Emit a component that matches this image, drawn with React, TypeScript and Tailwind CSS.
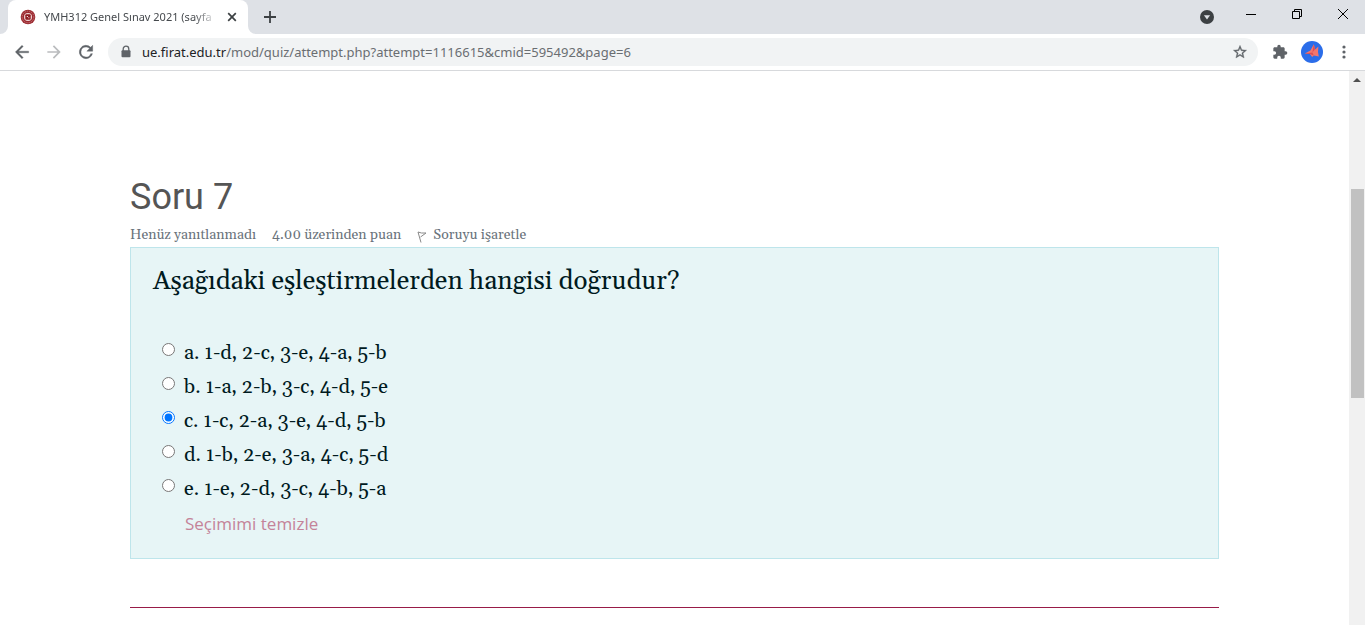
import React, { useState } from "react";

const serif = "font-[Georgia,Gelasio,'Liberation_Serif',serif]";

const options = [
  { id: "a", text: "a. 1-d, 2-c, 3-e, 4-a, 5-b" },
  { id: "b", text: "b. 1-a, 2-b, 3-c, 4-d, 5-e" },
  { id: "c", text: "c. 1-c, 2-a, 3-e, 4-d, 5-b" },
  { id: "d", text: "d. 1-b, 2-e, 3-a, 4-c, 5-d" },
  { id: "e", text: "e. 1-e, 2-d, 3-c, 4-b, 5-a" },
];

function TabStrip() {
  return (
    <div className="flex h-[34px] items-start bg-[#dee1e6]">
      <div className="flex h-full items-end">
        <svg className="h-2 w-2" viewBox="0 0 8 8"><path d="M8 0v8H0a8 8 0 0 0 8-8z" fill="#fff" /></svg>
        <div className="flex h-[34px] w-[240px] items-center rounded-t-lg bg-white pl-3">
          <svg className="h-4 w-4 shrink-0" viewBox="0 0 16 16">
            <circle cx="8" cy="8" r="7.3" fill="#9c2a30" />
            <circle cx="8" cy="8" r="5.8" fill="none" stroke="#c98285" strokeWidth=".8" strokeDasharray="1.5 .8" />
            <circle cx="8" cy="8" r="4" fill="#f0d8d8" />
            <rect x="5.3" y="5.3" width="5.4" height="5.4" rx="1" fill="#8f1d23" />
            <path d="M6.8 7h1.2v1H6.8zM8.3 8.2h1v1h-1z" fill="#f3dede" />
          </svg>
          <div className="ml-2 w-[174px] whitespace-nowrap font-['Noto_Sans',sans-serif] text-[11px] text-[#45494d] [mask-image:linear-gradient(to_right,black_86%,transparent)]">
            YMH312 Genel Sınav 2021 (sayfa
          </div>
          <button aria-label="Sekmeyi kapat" className="ml-2">
            <svg className="h-3 w-3" viewBox="0 0 12 12"><path d="M2.2 2.2l7.6 7.6M9.8 2.2L2.2 9.8" stroke="#3c4043" strokeWidth="1.7" /></svg>
          </button>
        </div>
        <svg className="h-2 w-2" viewBox="0 0 8 8"><path d="M0 0v8h8a8 8 0 0 1-8-8z" fill="#fff" /></svg>
      </div>
      <button aria-label="Yeni sekme" className="ml-2 mt-[11px]">
        <svg className="h-3 w-3" viewBox="0 0 12 12"><path d="M6 0v12M0 6h12" stroke="#3c4043" strokeWidth="1.8" /></svg>
      </button>
      <div className="ml-auto flex h-7 items-center">
        <button aria-label="Sekmelerde ara" className="mr-8 pt-1.5">
          <svg className="h-3.5 w-3.5" viewBox="0 0 14 14"><circle cx="7" cy="7" r="7" fill="#3c4043" /><path d="M3.9 5.2h6.2L7 9.4z" fill="#dee1e6" /></svg>
        </button>
        <button aria-label="Simge durumuna küçült" className="mr-9">
          <svg className="h-[10px] w-[10px]" viewBox="0 0 10 10"><path d="M0 5.5h10" stroke="#000" /></svg>
        </button>
        <button aria-label="Geri yükle" className="mr-9">
          <svg className="h-[10px] w-[10px]" viewBox="0 0 10 10"><path d="M.5 2.5h7v7h-7zM2.5 2.5v-2h7v7h-2" fill="none" stroke="#000" /></svg>
        </button>
        <button aria-label="Kapat" className="mr-[17px]">
          <svg className="h-[10px] w-[10px]" viewBox="0 0 10 10"><path d="M0 0l10 10M10 0L0 10" stroke="#000" /></svg>
        </button>
      </div>
    </div>
  );
}

function Toolbar() {
  return (
    <div className="flex h-[37px] items-center border-b border-[#d7d9dc] bg-white pl-3">
      <button aria-label="Geri"><svg className="h-5 w-5" viewBox="0 0 24 24"><path d="M20 11H7.83l5.59-5.59L12 4l-8 8 8 8 1.41-1.41L7.83 13H20z" fill="#5f6368" stroke="#5f6368" strokeWidth=".4" /></svg></button>
      <button aria-label="İleri" className="ml-3"><svg className="h-5 w-5" viewBox="0 0 24 24"><path d="M12 4l-1.41 1.41L16.17 11H4v2h12.17l-5.58 5.59L12 20l8-8z" fill="#babcbe" /></svg></button>
      <button aria-label="Yenile" className="ml-3"><svg className="h-5 w-5" viewBox="0 0 24 24"><path d="M17.65 6.35A8 8 0 1 0 19.73 14h-2.08A6 6 0 1 1 12 6c1.66 0 3.14.69 4.22 1.78L13 11h7V4z" fill="#5f6368" stroke="#5f6368" strokeWidth=".5" /></svg></button>
      <div className="ml-3 flex h-7 flex-1 items-center rounded-full bg-[#f1f3f4] pl-3 pr-2.5">
        <svg className="h-3.5 w-3 shrink-0" viewBox="0 0 12 14"><path d="M3.2 6V4a2.8 2.8 0 0 1 5.6 0v2" fill="none" stroke="#5f6368" strokeWidth="1.3" /><rect x="1.5" y="5.2" width="9" height="7" rx="1" fill="#5f6368" /></svg>
        <div className="ml-2.5 flex-1 whitespace-nowrap pt-px font-['Noto_Sans',sans-serif] text-[13px] text-[#6a6e72]">
          <span className="text-[#202124]">ue.firat.edu.tr</span>/mod/quiz/attempt.php?attempt=1116615&amp;cmid=595492&amp;page=6
        </div>
        <button aria-label="Yer işareti ekle"><svg className="h-4 w-4" viewBox="0 0 24 24"><path d="M22 9.24l-7.19-.62L12 2 9.19 8.63 2 9.24l5.46 4.73L5.82 21 12 17.27 18.18 21l-1.63-7.03zM12 15.4l-3.76 2.27 1-4.28-3.32-2.88 4.38-.38L12 6.1l1.71 4.04 4.38.38-3.32 2.88 1 4.28z" fill="#5f6368" stroke="#5f6368" strokeWidth=".5" /></svg></button>
      </div>
      <button aria-label="Uzantılar" className="ml-3.5"><svg className="h-4 w-4" viewBox="0 0 24 24"><path d="M20.5 11H19V7c0-1.1-.9-2-2-2h-4V3.5a2.5 2.5 0 0 0-5 0V5H4c-1.1 0-2 .9-2 2v3.8h1.5a2.7 2.7 0 0 1 0 5.4H2V20c0 1.1.9 2 2 2h3.8v-1.5a2.7 2.7 0 0 1 5.4 0V22H17c1.1 0 2-.9 2-2v-4h1.5a2.5 2.5 0 0 0 0-5z" fill="#5f6368" /></svg></button>
      <button aria-label="Profil" className="ml-[13px]">
        <svg className="h-[22px] w-[22px]" viewBox="0 0 22 22"><circle cx="11" cy="11" r="11" fill="#2b6de9" /><path d="M12.8 3.2L9.4 9.6 3.8 12.6l5 .4 2.4 3 1.6-1.6 5 1-.8-4.4.4-5.4-3.2 3z" fill="#f4766c" /><path d="M12.8 3.2L11.4 11.4l2.6-3.2zM3.8 12.6l7.6-1.2 1.4 3-4-1.4z" fill="#d94f55" /></svg>
      </button>
      <button aria-label="Menü" className="ml-[13px] mr-[13px]"><svg className="h-4 w-4" viewBox="0 0 16 16"><g fill="#5f6368"><circle cx="8" cy="3" r="1.6" /><circle cx="8" cy="8" r="1.6" /><circle cx="8" cy="13" r="1.6" /></g></svg></button>
    </div>
  );
}

export default function App() {
  const [selected, setSelected] = useState("c");
  return (
    <div className="flex min-h-screen flex-col bg-white font-['Open_Sans','Noto_Sans',sans-serif]">
      <TabStrip />
      <Toolbar />
      <div className="flex flex-1">
        <main className="flex-1 px-[130px] pt-[104px]">
          <h1 className="font-['Roboto',sans-serif] text-4xl leading-[44px] text-[#555]">Soru 7</h1>
          <div className={`${serif} mt-1 flex h-6 items-center text-sm text-[#6a737b]`}>
            <span>Henüz yanıtlanmadı</span>
            <span className="ml-4">4.00 üzerinden puan</span>
            <a href="#flag" className="ml-4 flex items-center">
              <svg className="mr-1.5 mt-1 h-3 w-2.5" viewBox="0 0 10 12"><path d="M1 1l3 10.5M1 1l3.5 1 4.5 0-5.5 4" fill="none" stroke="#888" /></svg>
              Soruyu işaretle
            </a>
          </div>
          <form className={`${serif} border border-[#bee5eb] bg-[#e7f5f6] px-[22px] pb-5 pt-3.5 text-[#001a1e]`}>
            <p className="text-[26px] leading-10">Aşağıdaki eşleştirmelerden hangisi doğrudur?</p>
            <div className="mt-[34px] flex h-[168px] flex-col justify-between text-xl">
              {options.map((o) => (
                <label key={o.id} className="flex items-start pl-[9px] leading-[34px]">
                  <input type="radio" name="answer" checked={selected === o.id} onChange={() => setSelected(o.id)} className="mr-[9px] mt-[7px] h-[13px] w-[13px]" />
                  {o.text}
                </label>
              ))}
            </div>
            <button type="button" onClick={() => setSelected("")} className="ml-8 mt-1.5 block font-['Open_Sans','Noto_Sans',sans-serif] text-[17px] leading-7 text-[#c48399]">Seçimimi temizle</button>
          </form>
          <hr className="mt-12 border-[#981b48]" />
        </main>
        <div className="flex w-4 flex-col items-center bg-[#f1f1f1]">
          <svg className="mt-[7px] h-1 w-2" viewBox="0 0 8 4"><path d="M0 4l4-4 4 4z" fill="#505050" /></svg>
          <div className="mt-[107px] h-[209px] w-[13px] bg-[#c1c1c1]" />
        </div>
      </div>
    </div>
  );
}
